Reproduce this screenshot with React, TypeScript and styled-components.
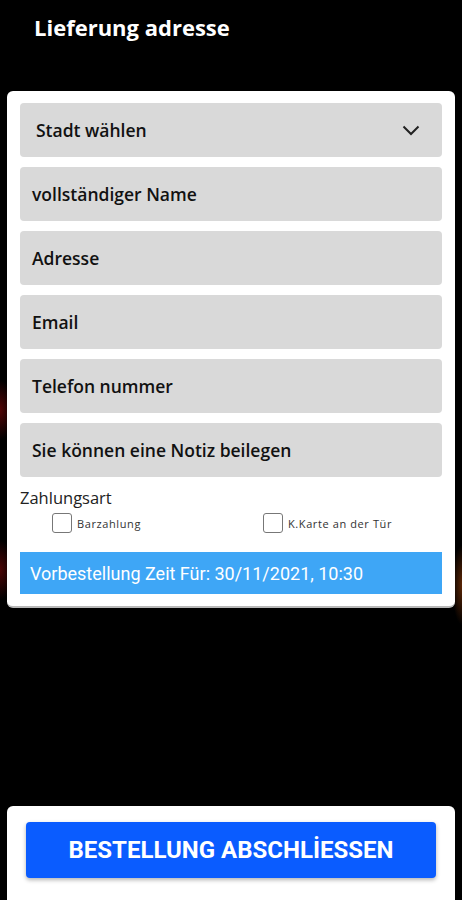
import React from "react";
import styled, { createGlobalStyle } from "styled-components";

const GlobalStyle = createGlobalStyle`
  html, body {
    margin: 0;
    padding: 0;
    background: #000;
  }
  body {
    font-family: "Open Sans", "Noto Sans", sans-serif;
  }
`;

const Page = styled.div`
  min-height: 900px;
  display: flex;
  flex-direction: column;
  background:
    radial-gradient(ellipse 14px 30px at 0px 410px, rgba(150, 10, 10, 0.55), transparent),
    radial-gradient(ellipse 14px 30px at 0px 570px, rgba(150, 10, 10, 0.5), transparent),
    radial-gradient(ellipse 10px 40px at 462px 585px, rgba(170, 70, 10, 0.55), transparent),
    #000;
`;

const Header = styled.div`
  height: 91px;
  box-sizing: border-box;
  padding: 12px 34px 0;
`;

const Title = styled.h1`
  margin: 0;
  color: #fff;
  font-family: "Open Sans", sans-serif;
  font-weight: 700;
  font-size: 22px;
  line-height: 30px;
`;

const Card = styled.div`
  margin: 0 7px;
  background: #fff;
  border-radius: 6px;
  border-bottom: 2px solid #b8b8b8;
  padding: 12px 13px 12px;
  display: flex;
  flex-direction: column;
`;

const Fields = styled.div`
  display: flex;
  flex-direction: column;
  gap: 10px;
`;

const Field = styled.div<{ $inset?: number }>`
  height: 54px;
  box-sizing: border-box;
  background: #d9d9d9;
  border-radius: 4px;
  padding: 0 22px 0 ${(p) => p.$inset ?? 12}px;
  display: flex;
  align-items: center;
  justify-content: space-between;
  color: #111;
  font-family: "Open Sans", sans-serif;
  font-weight: 600;
  font-size: 17.5px;
`;

const Label = styled.div`
  margin-top: 10px;
  color: #222;
  font-family: "Open Sans", sans-serif;
  font-size: 16.5px;
  line-height: 22px;
`;

const Options = styled.div`
  display: grid;
  grid-template-columns: 1fr 1fr;
  margin-top: 4px;
`;

const Option = styled.label`
  display: flex;
  align-items: center;
  gap: 5px;
  padding-left: 32px;
  color: #333;
  font-family: "Open Sans", sans-serif;
  font-size: 11px;
  letter-spacing: 0.6px;
`;

const Box = styled.span`
  width: 18px;
  height: 18px;
  border: 1.5px solid #777;
  border-radius: 3px;
  background: #fff;
`;

const TimeBar = styled.div`
  margin-top: 19px;
  height: 42px;
  background: #3ea6f6;
  display: flex;
  align-items: center;
  padding-left: 10px;
  color: #fff;
  font-family: Roboto, sans-serif;
  font-size: 18px;
`;

const Spacer = styled.div`
  flex: 1;
`;

const Footer = styled.div`
  margin: 0 7px;
  background: #fff;
  border-radius: 6px 6px 0 0;
  padding: 16px 19px 22px;
`;

const SubmitButton = styled.button`
  width: 100%;
  height: 56px;
  border: none;
  border-radius: 4px;
  background: #0a5cff;
  box-shadow: 0 2px 4px rgba(0, 0, 0, 0.3);
  color: #fff;
  font-family: Roboto, sans-serif;
  font-weight: 700;
  font-size: 24px;
`;

const Chevron = () => (
  <svg width="18" height="11" viewBox="0 0 18 11">
    <polyline points="1.5,1.5 9,9 16.5,1.5" fill="none" stroke="#222" strokeWidth="2" />
  </svg>
);

export default function App() {
  return (
    <>
      <GlobalStyle />
      <Page>
        <Header>
          <Title>Lieferung adresse</Title>
        </Header>
        <Card>
          <Fields>
            <Field $inset={16}>
              Stadt wählen
              <Chevron />
            </Field>
            <Field>vollständiger Name</Field>
            <Field>Adresse</Field>
            <Field>Email</Field>
            <Field>Telefon nummer</Field>
            <Field>Sie können eine Notiz beilegen</Field>
          </Fields>
          <Label>Zahlungsart</Label>
          <Options>
            <Option>
              <Box />
              Barzahlung
            </Option>
            <Option>
              <Box />
              K.Karte an der Tür
            </Option>
          </Options>
          <TimeBar>Vorbestellung Zeit Für: 30/11/2021, 10:30</TimeBar>
        </Card>
        <Spacer />
        <Footer>
          <SubmitButton>BESTELLUNG ABSCHLİESSEN</SubmitButton>
        </Footer>
      </Page>
    </>
  );
}
